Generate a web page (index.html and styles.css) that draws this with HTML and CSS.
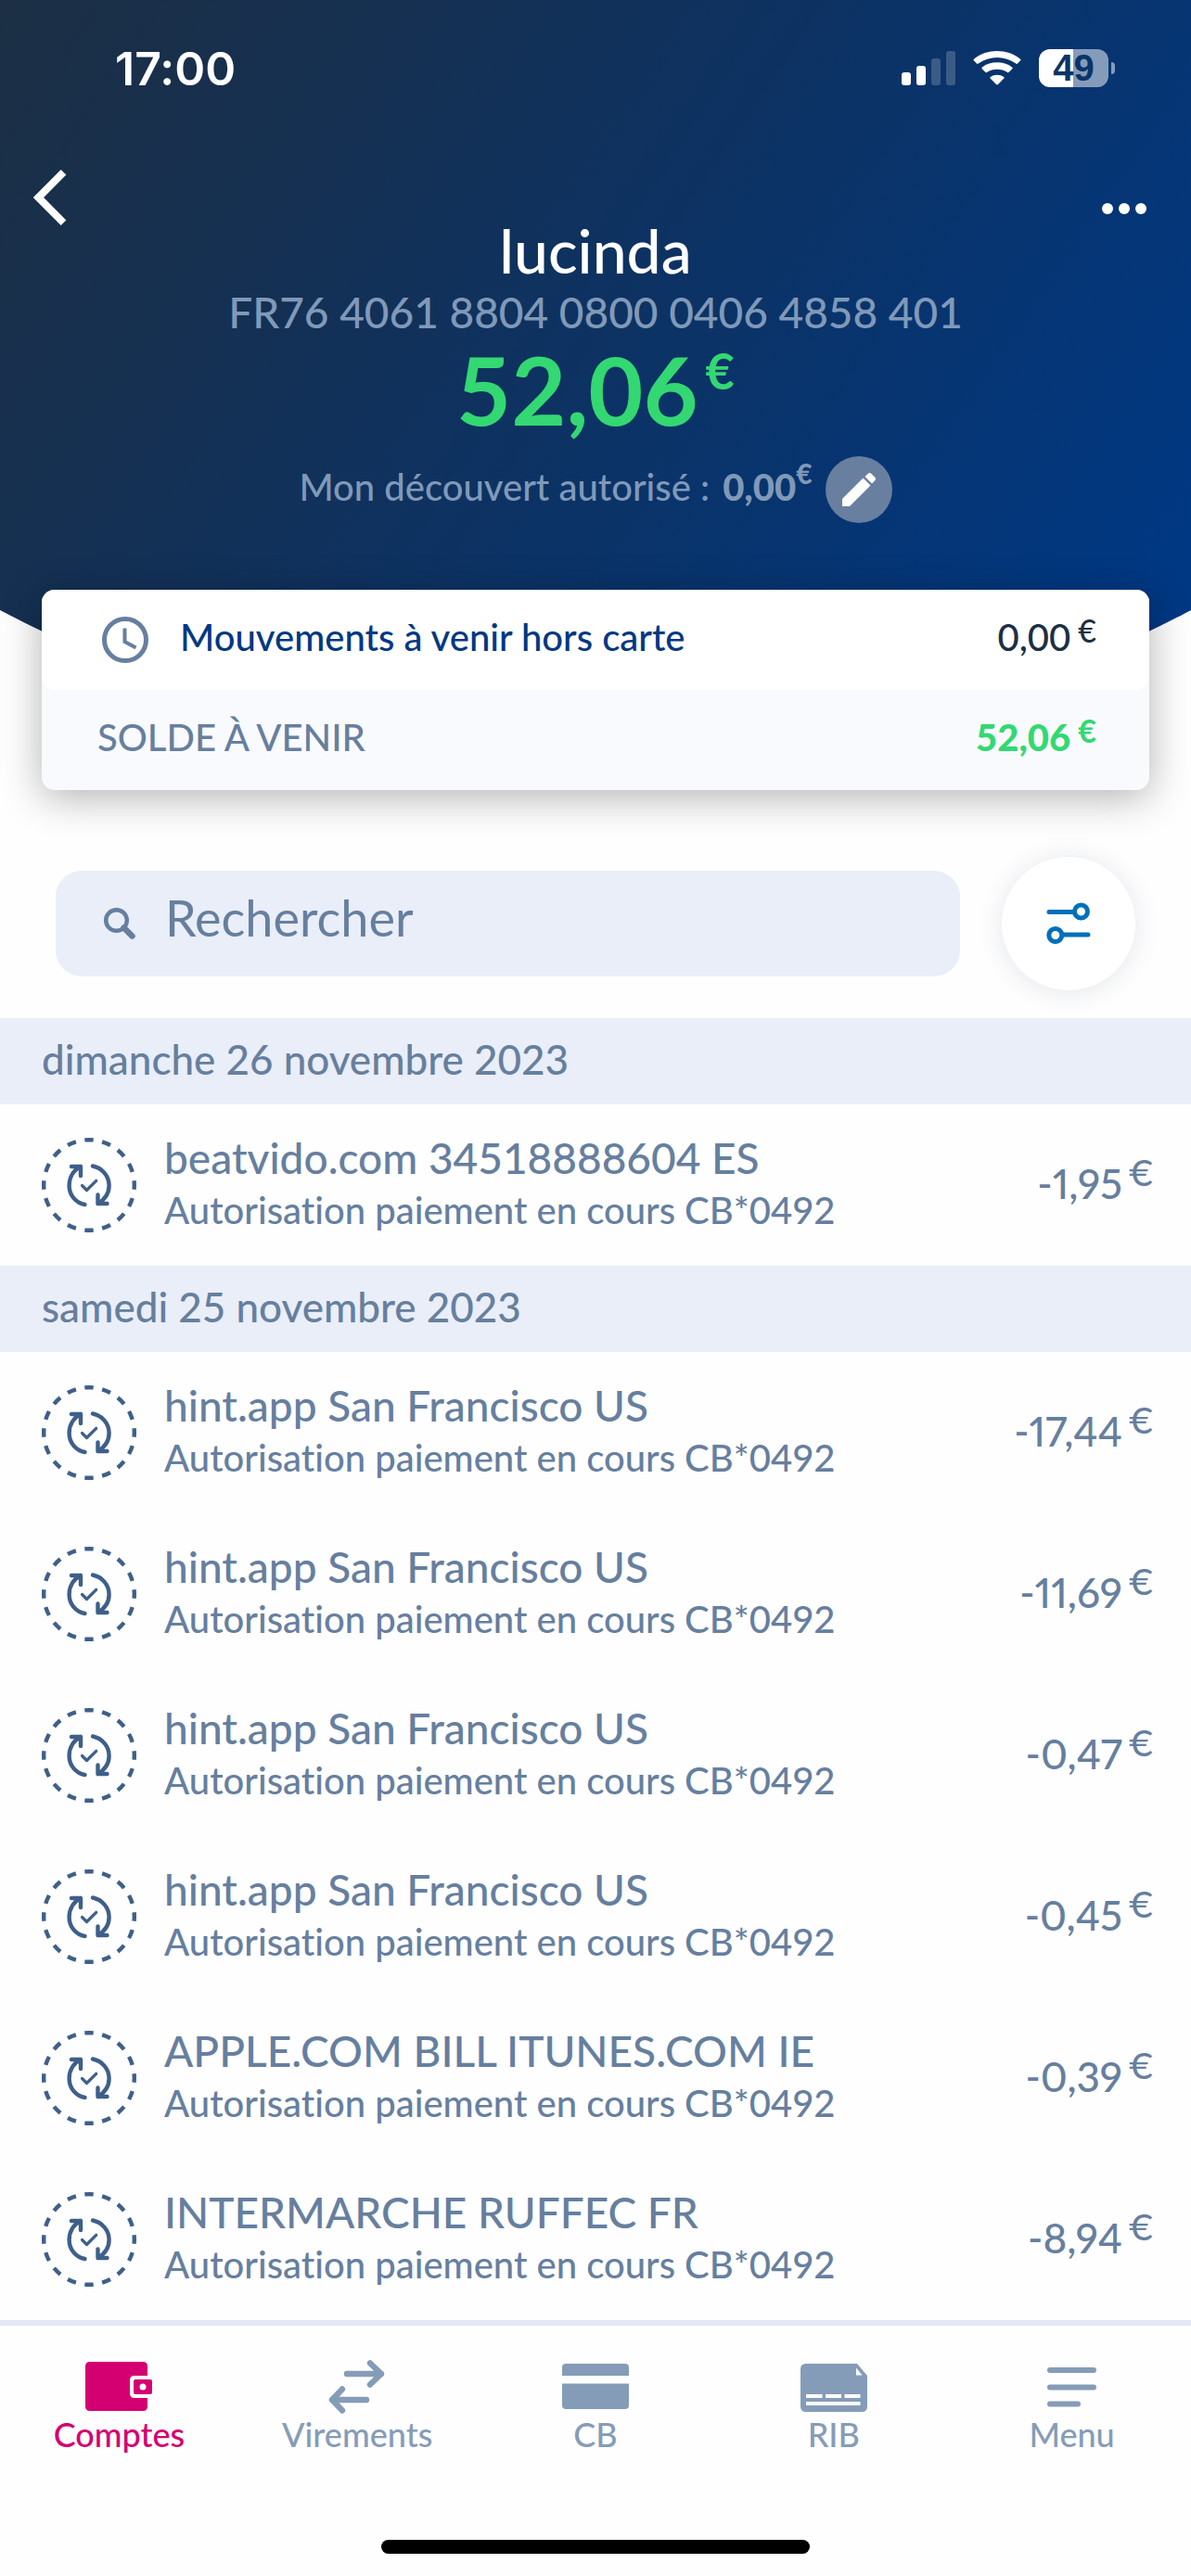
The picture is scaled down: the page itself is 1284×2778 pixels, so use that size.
FILE: index.html
```html
<!DOCTYPE html>
<html lang="fr">
<head>
  <meta charset="UTF-8" />
  <meta name="viewport" content="width=device-width, initial-scale=1" />
  <title>Compte lucinda</title>
  <link rel="stylesheet" href="styles.css">
</head>
<body>
  <!-- Shared icon for pending card payments -->
  <svg class="defs" width="0" height="0" aria-hidden="true">
    <symbol id="pending" viewBox="0 0 102 102">
      <g fill="none" stroke="#3e5f8a" stroke-width="4.4" stroke-linecap="round" stroke-linejoin="round">
        <circle cx="51" cy="51" r="48.8" pathLength="32" stroke-dasharray="1 1" stroke-dashoffset="0.5" stroke-linecap="butt" />
        <path d="M32 31H42V41M42 31C34 35 29.600 43 29.600 51.500C29.600 62 37 70.500 46.500 72" />
        <path d="M55 30.500C65 32.500 72.600 41 72.600 51.500C72.600 60 68 66.500 60.500 71M60.500 61.500V71H70.500" />
        <path d="M43.500 51.500L48.500 56.500L58.700 46.300" stroke-width="3.200" />
      </g>
    </symbol>
  </svg>

  <header class="header">
    <div class="status-bar">
      <span class="time">17:00</span>
      <div class="status-icons">
        <svg width="58" height="37" viewBox="0 0 58 37" fill="#fff" aria-hidden="true">
          <rect x="0" y="23" width="10" height="14" rx="3" />
          <rect x="16" y="16" width="10" height="21" rx="3" />
          <rect x="32" y="8" width="10" height="29" rx="3" opacity=".2" />
          <rect x="48" y="0" width="10" height="37" rx="3" opacity=".2" />
        </svg>
        <svg width="52" height="37" viewBox="0 0 52 37" fill="#fff" aria-hidden="true">
          <path d="M1 10.500Q0 9.500 1.200 8.500C15-2.800 37-2.800 50.800 8.500Q52 9.500 51 10.500L48 13.600Q47.200 14.400 46.200 13.600C34.500 4.800 17.500 4.800 5.800 13.600Q4.800 14.400 4 13.600Z" />
          <path d="M9.700 19.300Q8.800 18.300 9.900 17.400C19 10.600 33 10.600 42.100 17.400Q43.200 18.300 42.300 19.300L38.800 22.800Q38 23.600 37 22.900C30.500 18.600 21.500 18.600 15 22.900Q14 23.600 13.200 22.800Z" />
          <path d="M18.600 29.600Q17.700 28.600 18.800 27.900C23 25 29 25 33.200 27.900Q34.300 28.600 33.400 29.600L27 36.100Q26 37 25 36.100Z" />
        </svg>
        <div class="battery"><span class="battery-level">49</span><i class="battery-tip"></i></div>
      </div>
    </div>

    <nav class="nav">
      <button class="nav-back" type="button" aria-label="Retour">
        <svg width="36" height="60" viewBox="0 0 36 60" fill="none" stroke="#fff" stroke-width="8"><path d="M32.500 2.800L5.500 30L32.500 57.200" /></svg>
      </button>
      <button class="nav-more" type="button" aria-label="Plus">
        <svg width="48" height="12" viewBox="0 0 48 12" fill="#fff"><circle cx="6" cy="6" r="6" /><circle cx="24" cy="6" r="6" /><circle cx="42" cy="6" r="6" /></svg>
      </button>
    </nav>

    <h1 class="account-name">lucinda</h1>
    <p class="iban">FR76 4061 8804 0800 0406 4858 401</p>
    <p class="balance">52,06<sup>€</sup></p>
    <div class="overdraft">
      <p>Mon découvert autorisé : <b>0,00<sup>€</sup></b></p>
      <button class="edit" type="button" aria-label="Modifier">
        <svg width="36" height="36" viewBox="0 0 36 36" fill="#fff"><path d="M0 36V28L22.500 5.500L30.500 13.500L8 36Z" /><path d="M24.500 4L27.500 1Q29.500-1 31.500 1L35 4.500Q37 6.500 35 8.500L32 11.500Z" /></svg>
      </button>
    </div>
  </header>

  <section class="card">
    <a class="card-row upcoming" href="#">
      <svg width="50" height="50" viewBox="0 0 50 50" fill="none" stroke="#667f9f" aria-hidden="true"><circle cx="25" cy="25" r="22.500" stroke-width="5" /><path d="M24.500 12.500V27L36.500 33.500" stroke-width="4" /></svg>
      <span class="card-label">Mouvements à venir hors carte</span>
      <span class="card-value">0,00<sup>€</sup></span>
    </a>
    <div class="card-row total">
      <span class="card-label">SOLDE À VENIR</span>
      <span class="card-value">52,06<sup>€</sup></span>
    </div>
  </section>

  <form class="search">
    <label class="search-box">
      <svg width="34" height="34" viewBox="0 0 34 34" fill="none" stroke="#667f9f" aria-hidden="true"><circle cx="13.500" cy="13.500" r="11.300" stroke-width="4.500" /><path d="M21.500 21.500L30.500 30.500" stroke-width="6.500" stroke-linecap="round" /></svg>
      <input type="search" placeholder="Rechercher" aria-label="Rechercher" />
    </label>
    <button class="filter" type="button" aria-label="Filtrer">
      <svg width="48" height="46" viewBox="0 0 48 46" fill="none" stroke="#0070bb" stroke-width="5" stroke-linecap="round"><path d="M3 10.500H29M19 35H45" /><circle cx="37.500" cy="10" r="7" /><circle cx="9.800" cy="35.500" r="7" /></svg>
    </button>
  </form>

  <main>
    <h2 class="date">dimanche 26 novembre 2023</h2>
    <ul class="list">
      <li class="item">
        <svg class="item-icon" aria-hidden="true"><use href="#pending" /></svg>
        <div class="item-text"><p class="item-title">beatvido.com 34518888604 ES</p><p class="item-sub">Autorisation paiement en cours CB*0492</p></div>
        <span class="amount">-1,95<sup>€</sup></span>
      </li>
    </ul>
    <h2 class="date">samedi 25 novembre 2023</h2>
    <ul class="list">
      <li class="item">
        <svg class="item-icon" aria-hidden="true"><use href="#pending" /></svg>
        <div class="item-text"><p class="item-title">hint.app San Francisco US</p><p class="item-sub">Autorisation paiement en cours CB*0492</p></div>
        <span class="amount">-17,44<sup>€</sup></span>
      </li>
      <li class="item">
        <svg class="item-icon" aria-hidden="true"><use href="#pending" /></svg>
        <div class="item-text"><p class="item-title">hint.app San Francisco US</p><p class="item-sub">Autorisation paiement en cours CB*0492</p></div>
        <span class="amount">-11,69<sup>€</sup></span>
      </li>
      <li class="item">
        <svg class="item-icon" aria-hidden="true"><use href="#pending" /></svg>
        <div class="item-text"><p class="item-title">hint.app San Francisco US</p><p class="item-sub">Autorisation paiement en cours CB*0492</p></div>
        <span class="amount">-0,47<sup>€</sup></span>
      </li>
      <li class="item">
        <svg class="item-icon" aria-hidden="true"><use href="#pending" /></svg>
        <div class="item-text"><p class="item-title">hint.app San Francisco US</p><p class="item-sub">Autorisation paiement en cours CB*0492</p></div>
        <span class="amount">-0,45<sup>€</sup></span>
      </li>
      <li class="item">
        <svg class="item-icon" aria-hidden="true"><use href="#pending" /></svg>
        <div class="item-text"><p class="item-title">APPLE.COM BILL ITUNES.COM IE</p><p class="item-sub">Autorisation paiement en cours CB*0492</p></div>
        <span class="amount">-0,39<sup>€</sup></span>
      </li>
      <li class="item">
        <svg class="item-icon" aria-hidden="true"><use href="#pending" /></svg>
        <div class="item-text"><p class="item-title">INTERMARCHE RUFFEC FR</p><p class="item-sub">Autorisation paiement en cours CB*0492</p></div>
        <span class="amount">-8,94<sup>€</sup></span>
      </li>
    </ul>
  </main>

  <footer class="footer">
    <nav class="tabs">
      <a class="tab active" href="#">
        <svg width="72" height="60" viewBox="0 0 72 60" fill="currentColor" aria-hidden="true"><path d="M5 3H62Q67 3 67 8V18H53Q48 18 48 23V37Q48 42 53 42H67V51Q67 56 62 56H5Q0 56 0 51V8Q0 3 5 3Z" /><path fill-rule="evenodd" d="M54 22H70Q72 22 72 24V36Q72 38 70 38H54Q52 38 52 36V24Q52 22 54 22ZM62 26.500A3.500 3.500 0 1 0 62 33.500A3.500 3.500 0 1 0 62 26.500Z" /></svg>
        <span>Comptes</span>
      </a>
      <a class="tab" href="#">
        <svg width="72" height="60" viewBox="0 0 72 60" fill="none" stroke="currentColor" stroke-width="6.400" stroke-linecap="round" stroke-linejoin="round" aria-hidden="true"><path d="M25 16H62M50 4.500L62 16L50 27.500M46 44H9M20 32.500L9 44L20 55.500" /></svg>
        <span>Virements</span>
      </a>
      <a class="tab" href="#">
        <svg width="72" height="60" viewBox="0 0 72 60" fill="currentColor" aria-hidden="true"><path d="M4 5H68Q72 5 72 9V18H0V9Q0 5 4 5ZM0 26.500H72V50Q72 54 68 54H4Q0 54 0 50Z" /></svg>
        <span>CB</span>
      </a>
      <a class="tab" href="#">
        <svg width="72" height="60" viewBox="0 0 72 60" fill="currentColor" aria-hidden="true"><path fill-rule="evenodd" d="M6 5H61L72 18V51Q72 57 66 57H6Q0 57 0 51V11Q0 5 6 5ZM60 9.500V17.500H66.500ZM6 38V42H23.500V38ZM27 38V42H44V38ZM47.500 38V42H64.500V38ZM6 46V50H64.500V46Z" /></svg>
        <span>RIB</span>
      </a>
      <a class="tab" href="#">
        <svg width="72" height="60" viewBox="0 0 72 60" fill="none" stroke="currentColor" stroke-width="6" stroke-linecap="round" aria-hidden="true"><path d="M12 12H59M12 30.500H59M12 48.500H42" /></svg>
        <span>Menu</span>
      </a>
    </nav>
    <div class="home-indicator"></div>
  </footer>
</body>
</html>
```
FILE: styles.css
```css
* {
  box-sizing: border-box;
}

body {
  font-family: Lato, "Open Sans", sans-serif;
  font-variant-ligatures: none;
  margin: 0;
  min-height: 100vh;
  display: flex;
  flex-direction: column;
  background-color: #fefefe;
  color: #667f9f;
}

h1, h2, p, ul {
  margin: 0;
  padding: 0;
  font-weight: 500;
}

button {
  padding: 0;
  border: none;
  background: none;
  cursor: pointer;
}

a {
  color: inherit;
  text-decoration: none;
}

svg {
  display: block;
  flex-shrink: 0;
}

sup {
  line-height: 0;
}

.defs {
  position: absolute;
}

/* Header */
.header {
  background: linear-gradient(124deg, #1c2f44 0%, #153052 25%, #0b3367 55%, #003883 92%);
  clip-path: ellipse(107% 1371px at 50% -554px);
  padding-bottom: 253px;
  text-align: center;
}

.status-bar {
  display: flex;
  justify-content: space-between;
  align-items: center;
  height: 147px;
  padding: 0 82px 0 124px;
  font-family: Inter, sans-serif;
}

.time {
  color: #fff;
  font-size: 50px;
  font-weight: 600;
}

.status-icons {
  display: flex;
  align-items: center;
  gap: 19px;
}

.battery {
  display: flex;
  align-items: center;
  gap: 3px;
}

.battery-level {
  width: 75px;
  height: 41px;
  border-radius: 12px;
  background: linear-gradient(to right, #fff 49%, #859bba 49%);
  color: #0b3468;
  font-family: "Liberation Sans", sans-serif;
  font-size: 40px;
  font-weight: 700;
  line-height: 41px;
}

.battery-tip {
  width: 4px;
  height: 13px;
  border-radius: 0 6px 6px 0;
  background-color: #859bba;
}

.nav {
  display: flex;
  justify-content: space-between;
  align-items: flex-start;
  height: 87px;
  padding: 0 48px 0 36px;
}

.nav-back {
  padding-top: 36px;
}

.nav-more {
  padding-top: 72px;
}

.account-name {
  color: #fff;
  font-size: 66px;
  line-height: 72px;
}

.iban {
  color: #8099b8;
  font-size: 46px;
  line-height: 62px;
}

.balance {
  color: #33d872;
  font-size: 102px;
  font-weight: 700;
  line-height: 104px;
}

.balance sup {
  margin-left: 8px;
  font-size: 54px;
  vertical-align: 39px;
}

.overdraft {
  display: flex;
  justify-content: center;
  align-items: center;
  gap: 14px;
  margin-top: 20px;
  color: #8099b8;
  font-size: 40px;
}

.overdraft p {
  padding-bottom: 6px;
}

.overdraft b {
  margin-left: 4px;
  font-weight: 900;
}

.overdraft sup {
  font-size: 30px;
  vertical-align: 18px;
}

.edit {
  display: flex;
  justify-content: center;
  align-items: center;
  width: 72px;
  height: 72px;
  border-radius: 50%;
  background-color: #687f9f;
}

/* Upcoming movements */
.card {
  position: relative;
  margin: -181px 45px 0;
  border-radius: 14px;
  background-color: #f9fafe;
  box-shadow: 0 8px 44px rgba(0, 0, 0, 0.3);
}

.card-row {
  display: flex;
  align-items: center;
  height: 108px;
  padding: 0 57px 6px 60px;
  border-radius: 14px;
  font-size: 40px;
}

.card-label {
  flex: 1;
}

.card-value sup {
  margin-left: 8px;
  font-size: 34px;
  vertical-align: 9px;
}

.upcoming {
  gap: 34px;
  padding: 0 57px 6px 65px;
  background-color: #fff;
  color: #003883;
  font-weight: 500;
}

.upcoming svg {
  margin-top: 6px;
}

.upcoming .card-value {
  color: #1c2f44;
}

.total {
  font-weight: 500;
}

.total .card-value {
  color: #33d872;
  font-weight: 900;
}

.total sup {
  font-weight: 700;
}

/* Search */
.search {
  display: flex;
  align-items: center;
  gap: 45px;
  padding: 72px 60px 30px;
}

.search-box {
  flex: 1;
  display: flex;
  align-items: center;
  gap: 32px;
  height: 114px;
  padding: 0 52px;
  border-radius: 28px;
  background-color: #e9eef8;
}

.search-box input {
  flex: 1;
  min-width: 0;
  padding: 0 0 14px;
  border: none;
  outline: none;
  background: none;
  color: #667f9f;
  font-family: inherit;
  font-size: 54px;
}

.search-box input::placeholder {
  color: #667f9f;
}

.filter {
  display: flex;
  justify-content: center;
  align-items: center;
  width: 144px;
  height: 144px;
  border-radius: 50%;
  background-color: #fff;
  box-shadow: 0 2px 28px rgba(40, 60, 100, 0.12);
}

/* Operations */
.date {
  height: 93px;
  padding-left: 45px;
  background-color: #e9eef8;
  font-size: 44px;
  line-height: 88px;
}

.list {
  list-style: none;
}

.item {
  display: flex;
  align-items: center;
  gap: 30px;
  height: 174px;
  padding: 0 40px 0 45px;
}

.item-icon {
  width: 102px;
  height: 102px;
}

.item-text {
  flex: 1;
  white-space: nowrap;
}

.item-title {
  font-size: 46px;
  line-height: 54px;
}

.item-sub {
  font-size: 40px;
  line-height: 58px;
}

.amount {
  padding-bottom: 4px;
  font-size: 44px;
  font-variant-numeric: proportional-nums;
  font-weight: 500;
}

.amount sup {
  margin-left: 6px;
  font-size: 38px;
  vertical-align: 14px;
}

/* Bottom tabs */
.footer {
  margin-top: auto;
  padding-bottom: 24px;
  border-top: 6px solid #e4e8f4;
}

.tabs {
  display: flex;
}

.tab {
  flex: 1;
  display: flex;
  flex-direction: column;
  align-items: center;
  padding-top: 36px;
  color: #859cb8;
  font-size: 36px;
  font-weight: 500;
  line-height: 42px;
}

.tab.active {
  color: #d40072;
}

.home-indicator {
  width: 36%;
  height: 15px;
  margin: 93px auto 0;
  border-radius: 8px;
  background-color: #000;
}
```
